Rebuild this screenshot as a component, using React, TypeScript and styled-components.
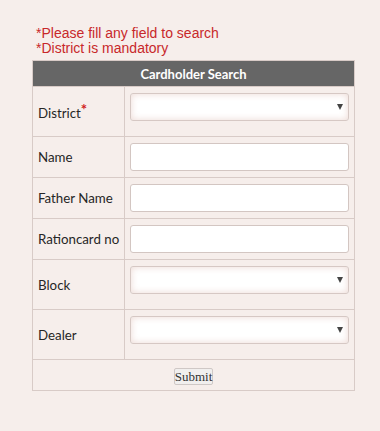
import React from "react";
import styled, { createGlobalStyle } from "styled-components";

const GlobalStyle = createGlobalStyle`
  html, body {
    margin: 0;
    padding: 0;
    background: #f6eeeb;
  }
  body {
    font-family: Lato, "Open Sans", "Liberation Sans", sans-serif;
  }
`;

const Page = styled.div`
  padding: 26px 0 0 32px;
  width: 323px;
`;

const Notes = styled.div`
  padding-left: 4px;
  margin-bottom: 5px;
  font-family: "Liberation Sans", Arial, sans-serif;
  font-size: 14px;
  line-height: 14.5px;
  color: #c8282a;
`;

const Table = styled.table`
  width: 323px;
  table-layout: fixed;
  border-collapse: collapse;
  border: 1px solid #d8cbc7;
`;

const Head = styled.th`
  height: 25px;
  padding: 0;
  background: #666666;
  color: #ffffff;
  font-size: 13px;
  font-weight: 700;
  text-align: center;
`;

const Row = styled.tr`
  border-top: 1px solid #d8cbc7;
`;

const Label = styled.td`
  padding: 0 0 0 5px;
  border-right: 1px solid #d8cbc7;
  font-size: 13.3px;
  color: #262626;
  vertical-align: middle;
  white-space: nowrap;
`;

const Star = styled.span`
  color: #d02020;
  font-weight: 700;
  font-size: 15px;
  position: relative;
  top: -3px;
`;

const Field = styled.td<{ $select?: boolean }>`
  padding: ${(p) => (p.$select ? "6px 6px 15px 5px" : "6px 6px 6px 5px")};
`;

const TextInput = styled.input`
  display: block;
  box-sizing: border-box;
  width: 219px;
  height: 28px;
  margin: 0;
  border: 1px solid #d3c6c2;
  border-radius: 3px;
  background: #ffffff;
`;

const SelectWrap = styled.div`
  position: relative;
  width: 219px;
  height: 28px;

  &::after {
    content: "";
    position: absolute;
    right: 6px;
    top: 11px;
    border-left: 3.5px solid transparent;
    border-right: 3.5px solid transparent;
    border-top: 6px solid #444444;
    pointer-events: none;
  }
`;

const Select = styled.select`
  appearance: none;
  display: block;
  box-sizing: border-box;
  width: 100%;
  height: 28px;
  margin: 0;
  border: 1px solid #d6c8c4;
  border-radius: 3px;
  background: #ffffff;
  box-shadow: inset 0 0 7px rgba(214, 170, 160, 0.45);
`;

const SubmitCell = styled.td`
  height: 30px;
  padding: 0;
  text-align: center;
  vertical-align: middle;
`;

const SubmitButton = styled.button`
  height: 17px;
  padding: 0;
  margin-top: 1px;
  font-family: "Liberation Serif", "Times New Roman", serif;
  font-size: 13px;
  line-height: 13px;
  color: #333333;
  background: #f1efee;
  border: 1px solid #cfc8c6;
  border-radius: 2px;
`;

const fields: { label: string; kind: "select" | "text"; required?: boolean }[] = [
  { label: "District", kind: "select", required: true },
  { label: "Name", kind: "text" },
  { label: "Father Name", kind: "text" },
  { label: "Rationcard no", kind: "text" },
  { label: "Block", kind: "select" },
  { label: "Dealer", kind: "select" },
];

export default function App() {
  return (
    <>
      <GlobalStyle />
      <Page>
        <Notes>
          *Please fill any field to search
          <br />
          *District is mandatory
        </Notes>
        <Table>
          <colgroup>
            <col style={{ width: "92px" }} />
            <col />
          </colgroup>
          <thead>
            <tr>
              <Head colSpan={2}>Cardholder Search</Head>
            </tr>
          </thead>
          <tbody>
            {fields.map((f) => (
              <Row key={f.label}>
                <Label>
                  {f.label}
                  {f.required && <Star>*</Star>}
                </Label>
                <Field $select={f.kind === "select"}>
                  {f.kind === "select" ? (
                    <SelectWrap>
                      <Select />
                    </SelectWrap>
                  ) : (
                    <TextInput type="text" />
                  )}
                </Field>
              </Row>
            ))}
            <Row>
              <SubmitCell colSpan={2}>
                <SubmitButton>Submit</SubmitButton>
              </SubmitCell>
            </Row>
          </tbody>
        </Table>
      </Page>
    </>
  );
}
